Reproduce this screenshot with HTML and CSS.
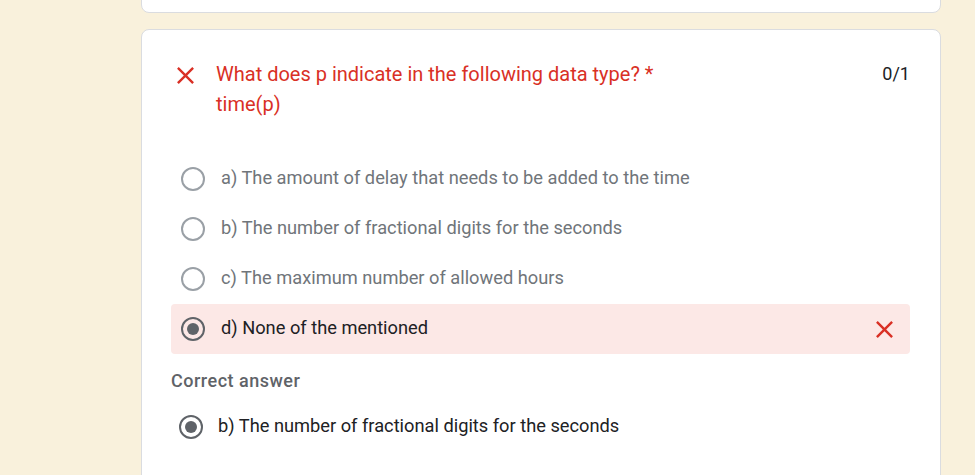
FILE: index.html
```html
<!DOCTYPE html>
<html>
<head>
<meta charset="utf-8">
<link rel="stylesheet" href="styles.css">
</head>
<body>
<div class="page">
  <div class="card card-prev"></div>
  <div class="card card-q">
    <div class="q-head">
      <svg class="q-icon" width="29" height="29" viewBox="0 0 24 24"><path d="M19 6.41 17.59 5 12 10.59 6.41 5 5 6.41 10.59 12 5 17.59 6.41 19 12 13.41 17.59 19 19 17.59 13.41 12z" fill="#d93025"/></svg>
      <div class="q-title">What does p indicate in the following data type? *<br>time(p)</div>
      <div class="q-score">0/1</div>
    </div>
    <div class="options">
      <div class="opt"><span class="radio"></span><span class="opt-text">a) The amount of delay that needs to be added to the time</span></div>
      <div class="opt"><span class="radio"></span><span class="opt-text">b) The number of fractional digits for the seconds</span></div>
      <div class="opt"><span class="radio"></span><span class="opt-text">c) The maximum number of allowed hours</span></div>
      <div class="opt opt-wrong"><span class="radio checked"></span><span class="opt-text">d) None of the mentioned</span>
        <svg class="wrong-icon" width="29" height="29" viewBox="0 0 24 24"><path d="M19 6.41 17.59 5 12 10.59 6.41 5 5 6.41 10.59 12 5 17.59 6.41 19 12 13.41 17.59 19 19 17.59 13.41 12z" fill="#d93025"/></svg>
      </div>
    </div>
    <div class="correct-label">Correct answer</div>
    <div class="correct-opt"><span class="radio checked"></span><span class="opt-text">b) The number of fractional digits for the seconds</span></div>
  </div>
</div>
</body>
</html>
```
FILE: styles.css
```css
html, body {
  margin: 0;
  padding: 0;
  background: #f9f1dc;
  font-family: Roboto, "Liberation Sans", Arial, sans-serif;
  overflow: hidden;
}
.page {
  width: 800px;
  margin-left: 141px;
  display: flex;
  flex-direction: column;
  gap: 16px;
  margin-top: -20px;
}
.card {
  background: #fff;
  border: 1px solid #dadce0;
  border-radius: 8px;
  box-sizing: border-box;
}
.card-prev {
  height: 33px;
}
.card-q {
  padding: 29px 30px 40px 29px;
  height: 480px;
}
.q-head {
  display: flex;
  align-items: flex-start;
}
.q-icon {
  margin: 2px 16px 0 0;
  flex: none;
}
.q-title {
  flex: 1;
  color: #d93025;
  font-size: 20px;
  line-height: 30px;
}
.q-score {
  color: #202124;
  font-size: 18px;
  line-height: 30px;
}
.options {
  margin-top: 35px;
  display: flex;
  flex-direction: column;
}
.opt {
  height: 50px;
  display: flex;
  align-items: center;
  padding-left: 10px;
  border-radius: 4px;
}
.radio {
  width: 24px;
  height: 24px;
  box-sizing: border-box;
  border: 2px solid #9aa0a6;
  border-radius: 50%;
  flex: none;
  display: flex;
  align-items: center;
  justify-content: center;
}
.radio.checked {
  border-color: #5f6368;
}
.radio.checked::after {
  content: "";
  width: 12px;
  height: 12px;
  border-radius: 50%;
  background: #5f6368;
}
.opt-text {
  margin-left: 16px;
  margin-bottom: 3px;
  font-size: 18.25px;
  color: #70757a;
}
.opt-wrong {
  background: #fce8e6;
}
.opt-wrong .opt-text {
  color: #202124;
  flex: 1;
}
.wrong-icon {
  margin-right: 11px;
}
.correct-label {
  margin-top: 17px;
  font-size: 18px;
  font-weight: 500;
  letter-spacing: 0.5px;
  color: #5f6368;
  line-height: 20px;
}
.correct-opt {
  margin-top: 20px;
  display: flex;
  align-items: center;
  padding-left: 8px;
  height: 32px;
}
.correct-opt .opt-text {
  color: #202124;
  margin-left: 15px;
}
```
